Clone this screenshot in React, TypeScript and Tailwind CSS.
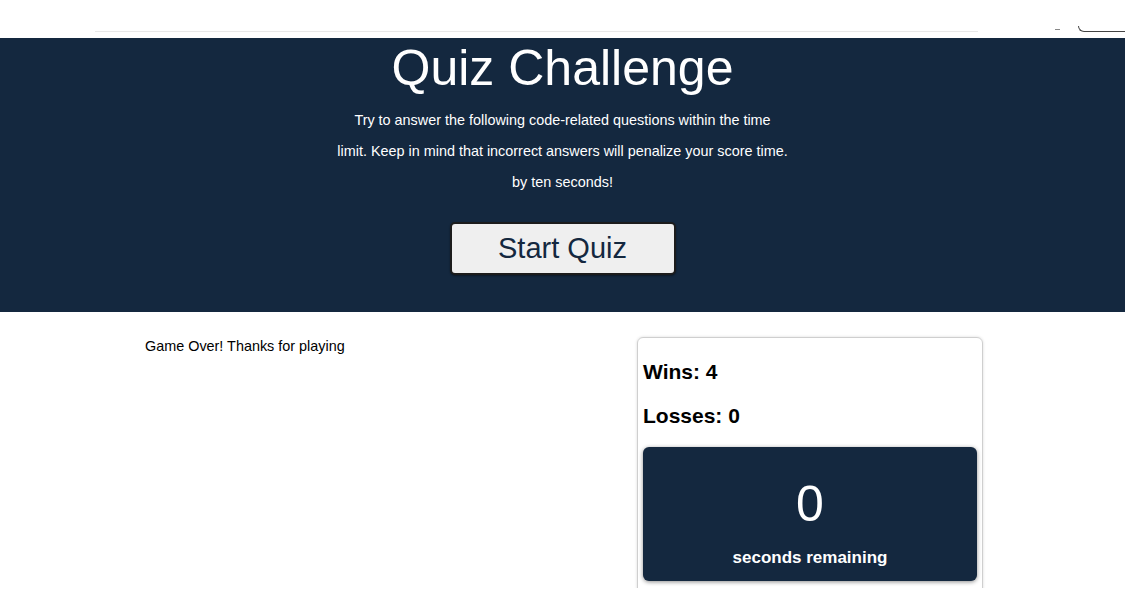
import * as React from "react";

const navy = "bg-[#14283f]";

export default function App() {
  return (
    <div className="w-[1131px] h-[596px] overflow-hidden bg-white font-['Liberation_Sans',Arial,sans-serif]">
      <div className="w-[1125px]">
        {/* cropped browser strip */}
        <div className="relative h-[38px] bg-white">
          <div className="ml-[95px] w-[883px] h-[32px] border-b border-[#e8e8e8]" />
          <div className="absolute left-[1055px] top-[29px] w-[5px] h-px bg-[#888]" />
          <div className="absolute left-[1078px] top-[26px] w-[47px] h-[6px] border-l border-b border-[#444] rounded-bl-[6px]" />
        </div>

        {/* header band */}
        <header className={`${navy} h-[274px] flex flex-col items-center text-white`}>
          <h1 className="mt-[1px] text-[50px] leading-[58px] font-normal">Quiz Challenge</h1>
          <div className="mt-[8px] text-[14.4px] leading-[31px] text-center">
            <p>Try to answer the following code-related questions within the time</p>
            <p>limit. Keep in mind that incorrect answers will penalize your score time.</p>
            <p>by ten seconds!</p>
          </div>
          <button className="mt-[24px] w-[226px] h-[53px] bg-[#efefef] border-2 border-[#1c1c1c] rounded-[5px] text-[29px] text-[#14283f] shadow-[0_1px_2px_rgba(0,0,0,0.4)]">
            Start Quiz
          </button>
        </header>

        {/* results */}
        <main className="flex h-[276px] overflow-hidden pt-[25px]">
          <p className="ml-[145px] w-[492px] text-[14.4px] leading-[18px] text-black">
            Game Over! Thanks for playing
          </p>
          <section className="w-[346px] h-[300px] border border-[#cfcfcf] rounded-[6px] shadow-[0_0_3px_rgba(0,0,0,0.15)] px-[5px] pt-[22px]">
            <h2 className="text-[21px] leading-[24px] font-bold text-black">Wins: 4</h2>
            <h2 className="mt-[20px] text-[21px] leading-[24px] font-bold text-black">Losses: 0</h2>
            <div className={`${navy} mt-[19px] h-[134px] rounded-[6px] shadow-[0_1px_4px_rgba(0,0,0,0.45)] flex flex-col items-center text-white`}>
              <span className="mt-[29px] text-[50px] leading-[56px]">0</span>
              <span className="mt-[16px] text-[17px] leading-[20px] font-bold">seconds remaining</span>
            </div>
          </section>
        </main>
      </div>
    </div>
  );
}
